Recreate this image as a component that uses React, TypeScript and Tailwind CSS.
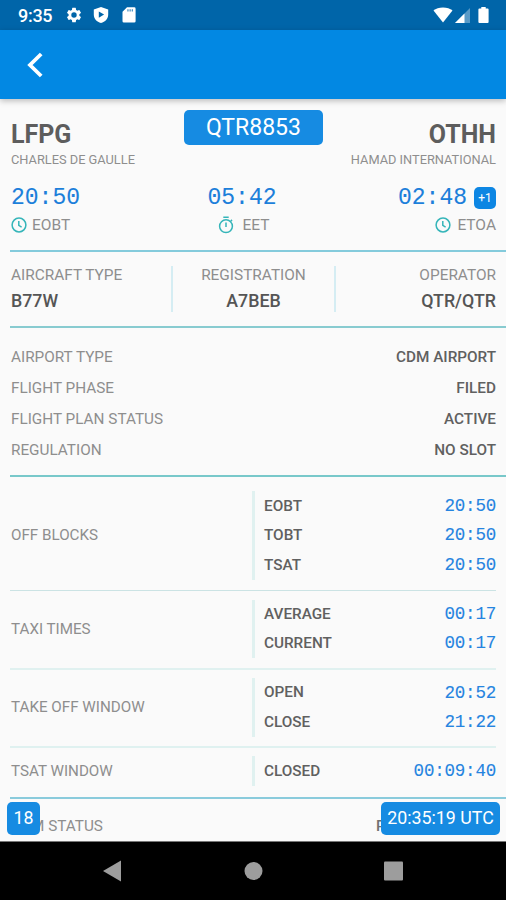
import React from 'react';

const summaryRows = [
  { label: 'AIRPORT TYPE', value: 'CDM AIRPORT' },
  { label: 'FLIGHT PHASE', value: 'FILED' },
  { label: 'FLIGHT PLAN STATUS', value: 'ACTIVE' },
  { label: 'REGULATION', value: 'NO SLOT' },
];

const timeGroups = [
  {
    title: 'OFF BLOCKS',
    className: 'h-[114px] pt-[14px] pb-[10px] border-b border-[#cbe3e4]',
    rows: [
      { label: 'EOBT', value: '20:50' },
      { label: 'TOBT', value: '20:50' },
      { label: 'TSAT', value: '20:50' },
    ],
  },
  {
    title: 'TAXI TIMES',
    className: 'h-[79px] pt-[9px] pb-[10px] border-b-2 border-[#e0f1f0]',
    rows: [
      { label: 'AVERAGE', value: '00:17' },
      { label: 'CURRENT', value: '00:17' },
    ],
  },
  {
    title: 'TAKE OFF WINDOW',
    className: 'h-[78px] pt-[8px] pb-[9px] border-b-2 border-[#dff1f0]',
    rows: [
      { label: 'OPEN', value: '20:52' },
      { label: 'CLOSE', value: '21:22' },
    ],
  },
  {
    title: 'TSAT WINDOW',
    className: 'h-[49px] pt-[8px] pb-[11px]',
    rows: [{ label: 'CLOSED', value: '00:09:40' }],
  },
];

function ClockIcon() {
  return (
    <svg className="w-4 h-4" viewBox="0 0 16 16" fill="none" stroke="#35b5b9" strokeWidth="1.5">
      <circle cx="8" cy="8" r="6.9" />
      <path d="M7.8 4v4.4l2.8 1.7" />
    </svg>
  );
}

function StopwatchIcon() {
  return (
    <svg className="w-4 h-[18px]" viewBox="0 0 16 18" fill="none" stroke="#35b5b9" strokeWidth="1.5">
      <circle cx="8" cy="10.2" r="6.4" />
      <path d="M5.3 1.2h5.4M8 6.5v4.6M12.7 5.2l1.3-1.3" />
    </svg>
  );
}

function StatusBar() {
  return (
    <div className="h-[30px] shrink-0 bg-[#0065a9] flex items-center text-white">
      <span className="w-[35px] ml-[18px] mt-[2px] text-[18px] font-medium leading-none tracking-[-0.3px]">9:35</span>
      <svg className="w-[18px] h-[18px] ml-[12px]" viewBox="0 0 24 24" fill="currentColor">
        <path d="M19.14 12.94c.04-.3.06-.61.06-.94 0-.32-.02-.64-.07-.94l2.03-1.58a.49.49 0 0 0 .12-.61l-1.92-3.32a.49.49 0 0 0-.59-.22l-2.39.96a7 7 0 0 0-1.62-.94l-.36-2.54a.48.48 0 0 0-.48-.41h-3.84a.48.48 0 0 0-.47.41l-.36 2.54c-.59.24-1.13.57-1.62.94l-2.39-.96a.48.48 0 0 0-.59.22L2.74 8.87a.48.48 0 0 0 .12.61l2.03 1.58c-.05.3-.09.63-.09.94s.02.64.07.94l-2.03 1.58a.49.49 0 0 0-.12.61l1.92 3.32c.12.22.37.29.59.22l2.39-.96c.5.38 1.03.7 1.62.94l.36 2.54c.05.24.24.41.48.41h3.84c.24 0 .44-.17.47-.41l.36-2.54a7 7 0 0 0 1.62-.94l2.39.96c.22.08.47 0 .59-.22l1.92-3.32a.48.48 0 0 0-.12-.61l-2.01-1.58zM12 15.6A3.6 3.6 0 1 1 12 8.4a3.6 3.6 0 0 1 0 7.2z" />
      </svg>
      <svg className="w-4 h-[18px] ml-[10px]" viewBox="0 0 16 18" fill="currentColor" fillRule="evenodd">
        <path d="M8 1l7.2 2.5v5c0 4.2-3 7.3-7.2 8.6C3.8 15.8.8 12.7.8 8.5v-5zM5.8 5.4v6.4l5.3-3.2z" />
      </svg>
      <svg className="w-[14px] h-4 ml-[13px]" viewBox="0 0 14 16" fill="currentColor">
        <path d="M5 .3h7.2a1.4 1.4 0 0 1 1.4 1.4v12.5a1.4 1.4 0 0 1-1.4 1.4H1.9A1.4 1.4 0 0 1 .5 14.2V4.8z" />
        <path d="M5.3 2.3h1.3v2.2H5.3zM7.5 2.3h1.3v2.2H7.5zM9.7 2.3H11v2.2H9.7z" fill="#4c93c4" />
      </svg>
      <svg className="w-5 h-4 ml-auto" viewBox="0 0 20 16" fill="currentColor">
        <path d="M.5 3.5C3 1.6 6 .4 10 .4s7 1.2 9.5 3.1L10 15.4z" />
      </svg>
      <svg className="w-[15px] h-[15px] ml-[2px]" viewBox="0 0 15 15" fill="currentColor">
        <path d="M15 0v15H0z" opacity="0.35" />
        <path d="M9.5 5.5V15H0z" />
      </svg>
      <svg className="w-[11px] h-4 ml-[8px] mr-[17px]" viewBox="0 0 11 16" fill="currentColor">
        <path d="M3.3 0h4.4v1.6h1.9a1 1 0 0 1 1 1V15a1 1 0 0 1-1 1H1.4a1 1 0 0 1-1-1V2.6a1 1 0 0 1 1-1h1.900z" />
      </svg>
    </div>
  );
}

function AppBar() {
  return (
    <div className="h-[69px] shrink-0 bg-[#0288e3] flex items-center shadow-[0_2px_6px_rgba(0,0,0,0.25)] z-10">
      <svg className="w-4 h-[26px] ml-[27px]" viewBox="0 0 16 26" fill="none" stroke="white" strokeWidth="3.8">
        <path d="M14.2 2L3 13l11.2 11" />
      </svg>
    </div>
  );
}

function RouteHeader() {
  return (
    <div className="h-[151px] shrink-0 ml-[11px] mr-[10px] relative text-[#8e8e8e]">
      <div className="flex justify-between pt-[21px] text-[25px] leading-[30px] font-bold text-[#5d5d5d]">
        <span>LFPG</span>
        <span>OTHH</span>
      </div>
      <div className="absolute top-[11px] left-[173px] w-[139px] h-[35px] rounded-[5px] bg-[#168be2] text-white text-[23px] leading-[35px] text-center">
        QTR8853
      </div>
      <div className="flex justify-between pt-[2px] text-[12.8px] leading-4">
        <span>CHARLES DE GAULLE</span>
        <span>HAMAD INTERNATIONAL</span>
      </div>
      <div className="flex items-center pt-[16px] h-[43px] font-['Liberation_Mono',monospace] text-[23px] leading-[28px] text-[#1c7fda] [-webkit-text-stroke:0.1px]">
        <span className="w-[150px]">20:50</span>
        <span className="w-[162px] text-center">05:42</span>
        <span className="flex-1 flex justify-end items-center">
          02:48
          <span className="ml-[7px] w-[22px] h-[22px] rounded-[5px] bg-[#0d86e3] text-white font-[Roboto,sans-serif] text-[12px] leading-[22px] text-center [-webkit-text-stroke:0]">+1</span>
        </span>
      </div>
      <div className="flex items-center h-[27px] text-[15.5px] leading-5">
        <span className="w-[150px] flex items-center gap-[5px]"><ClockIcon />EOBT</span>
        <span className="w-[166px] flex items-center justify-center gap-[8px]"><StopwatchIcon />EET</span>
        <span className="flex-1 flex items-center justify-end gap-[6px]"><ClockIcon />ETOA</span>
      </div>
    </div>
  );
}

function AircraftInfo() {
  return (
    <div className="h-[76px] shrink-0 ml-[10px] border-t-2 border-[#84cbdc] flex pt-[14px] pr-[10px] text-[17.8px] leading-[34px] font-medium text-[#555]">
      <div className="w-[163px] h-[46px] pl-px border-r-2 border-[#d5edf3]">
        <div className="text-[15.4px] leading-[18px] font-normal text-[#8e8e8e]">AIRCRAFT TYPE</div>
        <div>B77W</div>
      </div>
      <div className="w-[163px] h-[46px] border-r-2 border-[#d5edf3] text-center">
        <div className="text-[15.4px] leading-[18px] font-normal text-[#8e8e8e]">REGISTRATION</div>
        <div>A7BEB</div>
      </div>
      <div className="flex-1 text-right">
        <div className="text-[15.4px] leading-[18px] font-normal text-[#8e8e8e]">OPERATOR</div>
        <div>QTR/QTR</div>
      </div>
    </div>
  );
}

export default function App() {
  return (
    <div className="w-[506px] h-[900px] flex flex-col overflow-hidden bg-[#fafafa] font-[Roboto,sans-serif]">
      <StatusBar />
      <AppBar />
      <main className="h-[743px] shrink-0 relative overflow-hidden flex flex-col border-b border-[#777]">
        <RouteHeader />
        <AircraftInfo />
        <div className="h-[149px] shrink-0 ml-[10px] pt-[14px] pl-px pr-[10px] border-t-2 border-[#88cbd0]">
          {summaryRows.map((row) => (
            <div key={row.label} className="h-[31px] flex items-center justify-between text-[15.3px] text-[#8e8e8e]">
              <span>{row.label}</span>
              <span className="font-medium text-[#606060]">{row.value}</span>
            </div>
          ))}
        </div>
        <div className="h-[322px] shrink-0 ml-[10px] pr-[10px] border-t-2 border-[#78c8ca]">
          {timeGroups.map((group) => (
            <div key={group.title} className={`flex ${group.className}`}>
              <div className="w-[242px] pl-px flex items-center text-[15.2px] text-[#8e8e8e]">{group.title}</div>
              <div className="flex-1 flex flex-col justify-center border-l-3 border-[#e0f1f0] pl-[9px]">
                {group.rows.map((row) => (
                  <div key={row.label} className="h-[29.5px] flex items-center justify-between">
                    <span className="text-[15.3px] font-medium text-[#606060]">{row.label}</span>
                    <span className="font-['Liberation_Mono',monospace] text-[17.5px] tracking-[-0.2px] text-[#2584e0] [-webkit-text-stroke:0.1px]">{row.value}</span>
                  </div>
                ))}
              </div>
            </div>
          ))}
        </div>
        <div className="ml-[10px] pl-px pr-[10px] pt-[17px] border-t-2 border-[#8acbdc] flex justify-between text-[15.3px] leading-5 text-[#8e8e8e]">
          <span>CDM STATUS</span>
          <span className="w-[120px] font-medium text-[#707070]">PLANNED</span>
        </div>
        <div className="absolute left-[7px] bottom-[6px] w-[33px] h-[33px] rounded-[5px] bg-[#168be2] text-white text-[17.8px] leading-[32px] text-center">18</div>
        <div className="absolute right-[6px] bottom-[6px] w-[119px] h-[33px] rounded-[5px] bg-[#168be2] text-white text-[17.8px] leading-[32px] text-center">20:35:19 UTC</div>
      </main>
      <nav className="h-[58px] shrink-0 bg-black">
        <svg className="w-full h-full" viewBox="0 0 506 58" fill="#9d9d9d">
          <path d="M103 29l18-10.5v21z" />
          <circle cx="253.5" cy="29" r="9" />
          <rect x="384" y="19.5" width="19" height="19" rx="1" />
        </svg>
      </nav>
    </div>
  );
}
